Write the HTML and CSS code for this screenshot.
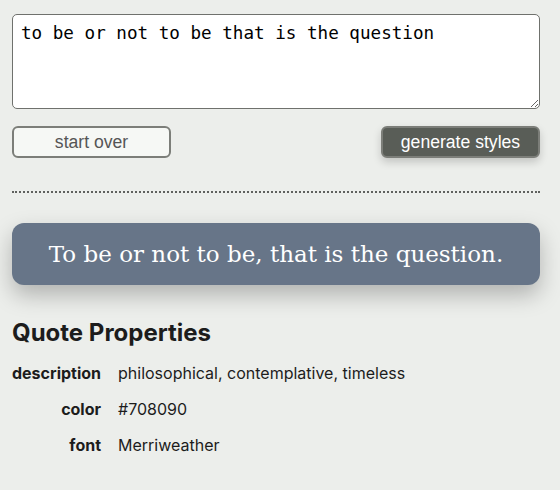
FILE: index.html
```html
<!DOCTYPE html>
<html lang="en">
<head>
<meta charset="utf-8">
<title>Quote Styler</title>
<link rel="stylesheet" href="styles.css">
</head>
<body>
<main class="app">
  <textarea class="input">to be or not to be that is the question</textarea>
  <div class="actions">
    <button class="btn btn-light">start over</button>
    <button class="btn btn-dark">generate styles</button>
  </div>
  <hr class="divider">
  <div class="quote">To be or not to be, that is the question.</div>
  <h2 class="props-title">Quote Properties</h2>
  <dl class="props">
    <dt>description</dt><dd>philosophical, contemplative, timeless</dd>
    <dt>color</dt><dd>#708090</dd>
    <dt>font</dt><dd>Merriweather</dd>
  </dl>
</main>
</body>
</html>
```
FILE: styles.css
```css
html, body {
  margin: 0;
  background: #eceeeb;
}
body {
  padding: 14px 12px 12px 12px;
  font-family: Inter, "Liberation Sans", sans-serif;
  color: #1c1c1c;
}
.app {
  display: flex;
  flex-direction: column;
  width: 528px;
}
.input {
  display: block;
  box-sizing: border-box;
  width: 100%;
  height: 95px;
  margin: 0;
  padding: 8px 8px;
  border: 1px solid #6f716d;
  border-radius: 5px;
  background: #fff;
  font-family: "DejaVu Sans Mono", monospace;
  font-size: 17.6px;
  line-height: 1.2;
  color: #000;
  resize: vertical;
}
.actions {
  display: flex;
  justify-content: space-between;
  margin-top: 17px;
}
.btn {
  box-sizing: border-box;
  width: 159px;
  height: 32px;
  border: 2px solid #7c7e79;
  border-radius: 6px;
  font-family: "Liberation Sans", Arial, sans-serif;
  font-size: 17.6px;
  padding: 0;
}
.btn-light {
  background: #f6f8f5;
  color: #555;
}
.btn-dark {
  background: #595d57;
  color: #fff;
  box-shadow: 0 4px 8px rgba(0,0,0,0.18);
}
.divider {
  margin: 33px 0 0 0;
  border: 0;
  border-top: 2px dotted #5f615e;
  height: 0;
}
.quote {
  margin-top: 30px;
  height: 62px;
  display: flex;
  align-items: center;
  justify-content: center;
  background: #677588;
  border-radius: 12px;
  color: #fff;
  font-family: "DejaVu Serif", serif;
  font-size: 23px;
  box-shadow: 0 10px 22px rgba(0,0,0,0.25);
}
.props-title {
  margin: 33px 0 0 0;
  font-size: 24px;
  font-weight: 700;
  line-height: 29px;
  color: #1c1c1c;
}
.props {
  display: grid;
  grid-template-columns: max-content 1fr;
  column-gap: 17px;
  row-gap: 12px;
  margin: 14px 0 0 0;
  font-size: 16px;
  line-height: 24px;
}
.props dt {
  font-weight: 700;
  text-align: right;
}
.props dd {
  margin: 0;
}
```
